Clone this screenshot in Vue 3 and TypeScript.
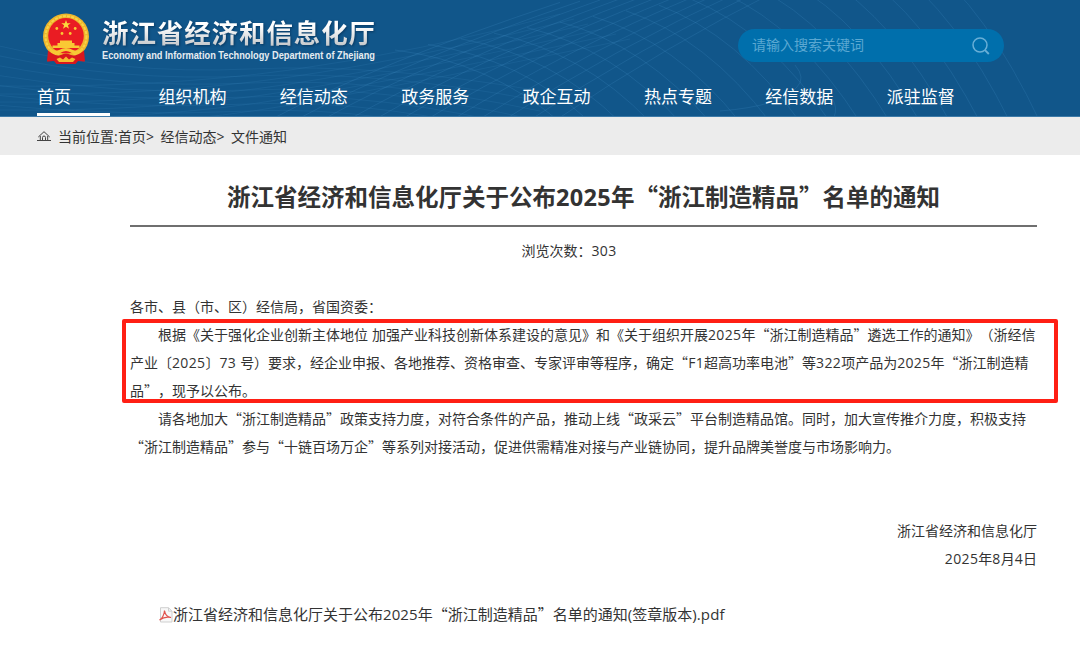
<script setup lang="ts">
import { h, type FunctionalComponent } from 'vue'

interface Row {
  text: string
  indent?: boolean
}

/* Splits mixed text so that latin letters and digits use their own family. */
const Mixed: FunctionalComponent<{ text: string }> = (props) =>
  h(
    'span',
    { class: 'mixed' },
    props.text
      .split(/([A-Za-z0-9.()>: ]+)/)
      .filter((part) => part.length > 0)
      .map((part) =>
        /^[A-Za-z0-9.()>: ]+$/.test(part) ? h('span', { class: 'latin' }, part) : part,
      ),
  )
Mixed.props = ['text']

const navItems: string[] = [
  '首页', '组织机构', '经信动态', '政务服务', '政企互动', '热点专题', '经信数据', '派驻监督',
]

const rows: Row[] = [
  { text: '各市、县（市、区）经信局，省国资委：' },
  { text: '根据《关于强化企业创新主体地位 加强产业科技创新体系建设的意见》和《关于组织开展2025年“浙江制造精品”遴选工作的通知》（浙经信', indent: true },
  { text: '产业〔2025〕73 号）要求，经企业申报、各地推荐、资格审查、专家评审等程序，确定“F1超高功率电池”等322项产品为2025年“浙江制造精' },
  { text: '品”，现予以公布。' },
  { text: '请各地加大“浙江制造精品”政策支持力度，对符合条件的产品，推动上线“政采云”平台制造精品馆。同时，加大宣传推介力度，积极支持', indent: true },
  { text: '“浙江制造精品”参与“十链百场万企”等系列对接活动，促进供需精准对接与产业链协同，提升品牌美誉度与市场影响力。' },
]

/* Header wave net: arcs that fall to the right, and lines that rise to the right. */
const falling: string[] = Array.from({ length: 17 }, (_, i) => {
  const x0 = 395 + i * 33
  const y0 = 50 - i * 5.6
  const x1 = 480 + i * 30
  return `M${x0} ${y0}Q${x0 + 95 - i * 2} ${y0 + 12 + i * 2.2} ${x1 + 80} ${122}`
})
const rising: string[] = Array.from({ length: 12 }, (_, i) => {
  const x0 = 270 + i * 26
  return `M${x0} 120Q${x0 + 110} ${62 - i * 1.5} ${x0 + 290 - i * 6} ${-12 + (12 - i) * 1.2}`
})
const swells: string[] = Array.from({ length: 7 }, (_, i) => {
  const y = 45 + i * 10
  return `M-5 ${y}Q120 ${y + 30 - i * 3} 250 ${y + 24 - i * 3}T540 ${y + 46}`
})
const crests: string[] = Array.from({ length: 6 }, (_, i) => {
  const y = 78 + i * 8
  return `M-5 ${y + 8}Q160 ${y + 10} 290 ${y - 8 - i}T${560 + i * 14} ${14 + i * 5}`
})
</script>

<template>
  <div class="page">
    <header class="header">
      <svg class="waves" width="1080" height="117" viewBox="0 0 1080 117" fill="none">
        <g stroke="#4f9ad0" stroke-opacity="0.18" stroke-width="1">
          <path v-for="(d, i) in falling" :key="'f' + i" :d="d" />
          <path v-for="(d, i) in rising" :key="'r' + i" :d="d" />
          <path d="M795 65Q806 78 797 87Q782 106 720 111M832 98Q838 108 834 117" />
        </g>
        <g stroke="#4f9ad0" stroke-opacity="0.13" stroke-width="1">
          <path v-for="(d, i) in swells" :key="'s' + i" :d="d" />
          <path v-for="(d, i) in crests" :key="'c' + i" :d="d" />
        </g>
      </svg>

      <div class="masthead">
        <svg class="emblem" width="48" height="52" viewBox="0 0 48 52">
          <path d="M7 36L5.500 48.500L12 48L14.500 50.500H33.500L36 48L42 48.500L41 36Z" fill="#d3141c" />
          <circle cx="24" cy="23.500" r="23" fill="#eeb52b" />
          <circle cx="24" cy="23.500" r="20.400" fill="none" stroke="#f8d348" stroke-width="2" stroke-dasharray="3 1.200" />
          <circle cx="24" cy="22.800" r="17.800" fill="#ea1c23" />
          <path d="M24 7L25.200 10.200H28.700L25.900 12.300L27 15.700L24 13.700L21 15.700L22.100 12.300L19.300 10.200H22.800Z" fill="#fbd83c" />
          <g fill="#f9c934">
            <circle cx="14.800" cy="15.500" r="1.400" />
            <circle cx="33.200" cy="15.500" r="1.400" />
            <circle cx="20" cy="20.500" r="1.400" />
            <circle cx="28.200" cy="20.500" r="1.400" />
            <path d="M18 27.500H30V30H32.500V32.500H37.500V35H10.500V32.500H15.500V30H18Z" />
          </g>
          <path d="M7 34Q11 39 17 37Q24 33 31 37Q37 39 41 34L39 41Q32 43 29 39.500Q24 36.500 19 39.500Q16 43 9 41Z" fill="#f7c934" />
          <path d="M6 37.500Q14 44 19 42Q24 39.500 29 42Q34 44 42 37.500L43 48.500L36 47.500L33.500 51H14.500L12 47.500L5 48.500Z" fill="#d9171e" />
          <path d="M14.500 46L18 44.500L21 46.500L24 43.500L27 46.500L30 44.500L33.500 46L31 49H17Z" fill="#f5bd2e" />
        </svg>
        <div class="brand">
          <div class="brand-name">浙江省经济和信息化厅</div>
          <svg class="brand-sub" width="276" height="16" viewBox="0 0 276 16">
            <text x="0" y="11" textLength="273" lengthAdjust="spacingAndGlyphs">Economy and Information Technology Department of Zhejiang</text>
          </svg>
        </div>
        <div class="search">
          <span>请输入搜索关键词</span>
          <svg width="20" height="20" viewBox="0 0 20 20" fill="none" stroke="#68afd7" stroke-width="1.500">
            <circle cx="9" cy="9" r="7" />
            <path d="M14 14.200L17.800 18" stroke-width="1.900" />
          </svg>
        </div>
      </div>

      <nav class="nav">
        <a v-for="(item, i) in navItems" :key="item" :class="{ active: i === 0 }">{{ item }}</a>
      </nav>
    </header>

    <div class="crumbs">
      <svg width="14" height="12" viewBox="0 0 14 12" fill="none" stroke="#444" stroke-width="1">
        <path d="M1.300 7L7 1.700L12.700 7M3.300 6V10M10.700 6V10M5.500 10V7.500Q5.500 6 7 6T8.500 7.500V10M0 10.500H14" />
      </svg>
      <Mixed text="当前位置:首页> 经信动态> 文件通知" />
    </div>

    <main class="article">
      <h1><Mixed text="浙江省经济和信息化厅关于公布2025年“浙江制造精品”名单的通知" /></h1>
      <div class="views"><Mixed text="浏览次数：303" /></div>

      <div class="body">
        <p v-for="row in rows" :key="row.text" :class="{ indent: row.indent }">
          <Mixed :text="row.text" />
        </p>
        <div class="highlight"></div>
      </div>

      <div class="signature">
        <p>浙江省经济和信息化厅</p>
        <p><Mixed text="2025年8月4日" /></p>
      </div>

      <div class="attachment">
        <svg width="14" height="16" viewBox="0 0 14 16" fill="none">
          <path d="M1.500 0.700H9.500L13 4.200V15H1.500Z" fill="#f8f8f8" stroke="#cfcfcf" />
          <path d="M9.500 0.700V4.200H13" stroke="#cfcfcf" />
          <path d="M0.500 13C3 12 5.500 7 5.500 3.500C6 7 8 10 12 10.500C8 9.500 4 10.500 0.500 13Z" stroke="#e0524d" stroke-width="1.200" />
        </svg>
        <Mixed text="浙江省经济和信息化厅关于公布2025年“浙江制造精品”名单的通知(签章版本).pdf" />
      </div>
    </main>
  </div>
</template>

<style>
body {
  margin: 0;
  background: #fff;
}
.mixed {
  white-space: pre;
}
.mixed .latin {
  font-family: "Open Sans", "Noto Sans", sans-serif;
  letter-spacing: 0.35px;
}
.crumbs .latin {
  letter-spacing: 0.3px;
  word-spacing: 2.200px;
}
.attachment .latin {
  letter-spacing: 0.1px;
}
</style>

<style scoped>
.page {
  width: 1080px;
  height: 653px;
  overflow: hidden;
  background: #fff;
  color: #333;
  font-family: "Noto Sans CJK SC", sans-serif;
  font-size: 14px;
  text-spacing-trim: space-all;
}
.header {
  position: relative;
  height: 116px;
  background: #11568a;
  border-bottom: 1px solid #3c7aa8;
  overflow: hidden;
}
.waves {
  position: absolute;
  inset: 0;
}
.masthead {
  position: relative;
  display: flex;
  height: 78px;
  padding: 0 76px 0 42px;
}
.emblem {
  margin-top: 13px;
  flex: none;
}
.brand {
  width: 290px;
  margin: 13px 0 0 12px;
}
.brand-name {
  height: 38px;
  line-height: 37px;
  font-size: 26.500px;
  font-weight: 700;
  letter-spacing: 0.9px;
  white-space: nowrap;
  color: transparent;
  background: linear-gradient(#fff 35%, #c6c9cc 85%);
  background-clip: text;
  filter: drop-shadow(1px 1px 1px rgba(0, 30, 60, 0.5));
}
.brand-sub {
  display: block;
  margin-top: -3px;
  overflow: visible;
  fill: #e6ecf1;
  font: 700 10.500px "Liberation Sans", Arial, sans-serif;
}
.search {
  display: flex;
  align-items: center;
  justify-content: space-between;
  box-sizing: border-box;
  width: 266px;
  height: 33px;
  margin: 29px 0 0 auto;
  padding: 0 13px 0 14px;
  border-radius: 17px;
  background: #006fac;
  color: #5ba8d2;
}
.search span {
  padding-bottom: 3px;
}
.nav {
  position: relative;
  display: flex;
  height: 38px;
  padding-left: 37px;
}
.nav a {
  box-sizing: border-box;
  width: 73px;
  height: 38px;
  margin-right: 48.400px;
  line-height: 35px;
  font-size: 17px;
  white-space: nowrap;
  color: #fff;
}
.nav a.active {
  border-bottom: 3px solid #fff;
}
.crumbs {
  display: flex;
  align-items: center;
  gap: 7px;
  height: 38px;
  padding-left: 37px;
  background: #ececec;
}
.article {
  padding: 0 43px 0 130px;
}
h1 {
  height: 70px;
  margin: 0;
  border-bottom: 2px solid #6f6f6f;
  line-height: 83px;
  font-size: 23.500px;
  font-weight: 700;
  text-align: center;
  white-space: nowrap;
}
.views {
  height: 47px;
  line-height: 46px;
  padding-right: 29px;
  text-align: center;
}
.body {
  position: relative;
  padding-top: 18px;
}
p {
  height: 28px;
  margin: 0;
  line-height: 28px;
  white-space: nowrap;
}
.indent {
  padding-left: 28px;
}
.highlight {
  position: absolute;
  left: -8.500px;
  top: 45px;
  width: 928px;
  height: 76px;
  border: 4px solid #ff1f14;
  border-radius: 2px;
}
.signature {
  margin-top: 56px;
  text-align: right;
}
.attachment {
  display: flex;
  align-items: center;
  height: 28px;
  margin: 27px 0 0 29px;
  font-size: 15px;
  white-space: nowrap;
}
.attachment svg {
  margin-top: 4px;
}
</style>
